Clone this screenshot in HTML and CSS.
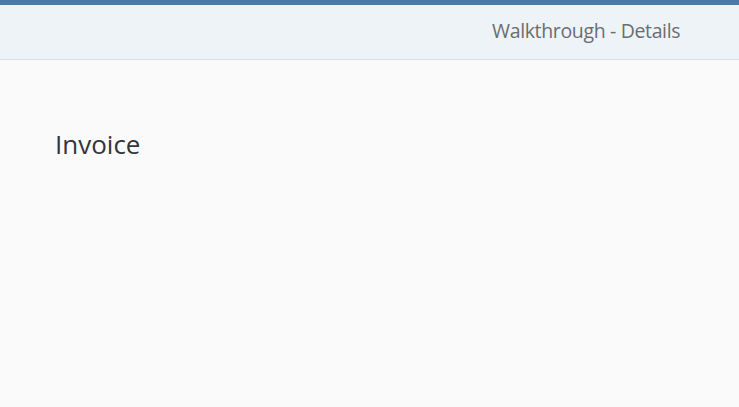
FILE: index.html
```html
<!DOCTYPE html>
<html>
<head>
<meta charset="utf-8">
<link rel="stylesheet" href="styles.css">
</head>
<body>
<div class="shell-bar"></div>
<header class="page-header">
  <h1 class="page-title">Walkthrough - Details</h1>
</header>
<main class="content">
  <h2 class="object-title">Invoice</h2>
</main>
</body>
</html>
```

FILE: styles.css
```css
html, body {
  margin: 0;
  padding: 0;
  height: 100%;
}
body {
  background: #fafafa;
  font-family: "Open Sans", "Noto Sans", sans-serif;
  color: #32363a;
}
.shell-bar {
  height: 5px;
  background: #4a79a5;
}
.page-header {
  height: 55px;
  background: #eef3f8;
  border-bottom: 1px solid #d6e2ee;
  box-sizing: border-box;
  display: flex;
  align-items: center;
  padding-left: 492px;
  padding-bottom: 3px;
}
.page-title {
  margin: 0;
  font-size: 19.5px;
  font-weight: normal;
  color: #6a6d70;
  letter-spacing: -0.35px;
}
.content {
  padding: 68px 0 0 55px;
}
.object-title {
  margin: 0;
  font-size: 26px;
  font-weight: normal;
  line-height: 32px;
  color: #32363a;
}
```
